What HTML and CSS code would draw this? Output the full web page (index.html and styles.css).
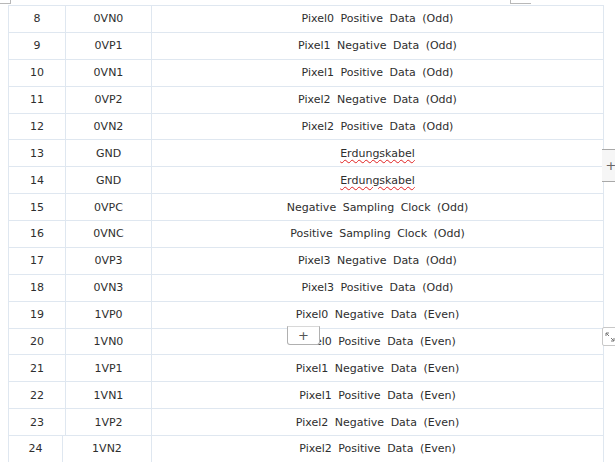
FILE: index.html
```html
<!DOCTYPE html>
<html>
<head>
<meta charset="utf-8">
<link rel="stylesheet" href="styles.css">
</head>
<body>
<div class="page">
  <div class="mark mark-left"></div>
  <div class="mark mark-right"></div>
  <div class="table">
    <div class="row"><div class="c">8</div><div class="c">0VN0</div><div class="c">Pixel0 Positive Data (Odd)</div></div>
    <div class="row"><div class="c">9</div><div class="c">0VP1</div><div class="c">Pixel1 Negative Data (Odd)</div></div>
    <div class="row"><div class="c">10</div><div class="c">0VN1</div><div class="c">Pixel1 Positive Data (Odd)</div></div>
    <div class="row"><div class="c">11</div><div class="c">0VP2</div><div class="c">Pixel2 Negative Data (Odd)</div></div>
    <div class="row"><div class="c">12</div><div class="c">0VN2</div><div class="c">Pixel2 Positive Data (Odd)</div></div>
    <div class="row"><div class="c">13</div><div class="c">GND</div><div class="c"><span class="spell">Erdungskabel</span></div></div>
    <div class="row"><div class="c">14</div><div class="c">GND</div><div class="c"><span class="spell">Erdungskabel</span></div></div>
    <div class="row"><div class="c">15</div><div class="c">0VPC</div><div class="c">Negative Sampling Clock (Odd)</div></div>
    <div class="row"><div class="c">16</div><div class="c">0VNC</div><div class="c">Positive Sampling Clock (Odd)</div></div>
    <div class="row"><div class="c">17</div><div class="c">0VP3</div><div class="c">Pixel3 Negative Data (Odd)</div></div>
    <div class="row"><div class="c">18</div><div class="c">0VN3</div><div class="c">Pixel3 Positive Data (Odd)</div></div>
    <div class="row"><div class="c">19</div><div class="c">1VP0</div><div class="c">Pixel0 Negative Data (Even)</div></div>
    <div class="row"><div class="c">20</div><div class="c">1VN0</div><div class="c">Pixel0 Positive Data (Even)</div></div>
    <div class="row"><div class="c">21</div><div class="c">1VP1</div><div class="c">Pixel1 Negative Data (Even)</div></div>
    <div class="row"><div class="c">22</div><div class="c">1VN1</div><div class="c">Pixel1 Positive Data (Even)</div></div>
    <div class="row"><div class="c">23</div><div class="c">1VP2</div><div class="c">Pixel2 Negative Data (Even)</div></div>
    <div class="row row-last"><div class="c">24</div><div class="c">1VN2</div><div class="c">Pixel2 Positive Data (Even)</div></div>
  </div>
  <div class="add-col">+</div>
  <div class="add-row">+</div>
  <div class="resize">
    <svg width="10" height="10" viewBox="0 0 10 10"><path d="M1 1h3M1 1v3M1 1l3 3M9 9h-3M9 9v-3M9 9l-3-3" stroke="#777" stroke-width="1" fill="none"/></svg>
  </div>
</div>
</body>
</html>
```

FILE: styles.css
```css
html, body {
  margin: 0;
  padding: 0;
  background: #fff;
  overflow: hidden;
}
.page {
  position: relative;
  width: 615px;
  height: 462px;
  overflow: hidden;
  font-family: "DejaVu Sans", Tahoma, sans-serif;
  font-size: 11px;
  color: #2e2e2e;
}
.mark {
  position: absolute;
  border-color: #b8b8b8;
  border-style: solid;
}
.mark-left {
  left: 0;
  top: 0;
  width: 10px;
  height: 3px;
  border-width: 0 1px 1px 0;
}
.mark-right {
  left: 510px;
  top: 0;
  width: 20px;
  height: 3px;
  border-width: 0 0 1px 1px;
}
.table {
  margin: 5px 0 0 8px;
  width: 595px;
  border-top: 1px solid #dfe7f0;
  border-left: 1px solid #dfe7f0;
}
.row {
  display: grid;
  grid-template-columns: 57px 86px 1fr;
  height: 26.875px;
  box-sizing: border-box;
  border-bottom: 1px solid #dfe7f0;
}
.row-last {
  grid-template-columns: 54px 89px 1fr;
}
.c {
  display: flex;
  align-items: center;
  justify-content: center;
  border-right: 1px solid #dfe7f0;
  white-space: pre;
  word-spacing: 3px;
}
.spell {
  text-decoration: underline wavy #e02020;
  text-decoration-thickness: 1px;
  text-underline-offset: 2px;
  word-spacing: 0;
}
.add-col {
  position: absolute;
  left: 602px;
  top: 149px;
  width: 14px;
  height: 31px;
  background: #f6f6f6;
  border-top: 1px solid #a8a8a8;
  border-bottom: 1px solid #a8a8a8;
  display: flex;
  align-items: center;
  justify-content: center;
  color: #666;
  font-size: 13px;
  padding-left: 2px;
}
.add-row {
  position: absolute;
  left: 287px;
  top: 326px;
  width: 31px;
  height: 17px;
  background: #fff;
  border: 1px solid #b0b0b0;
  border-top-color: #d8d8d8;
  border-radius: 0 0 3px 3px;
  display: flex;
  align-items: center;
  justify-content: center;
  color: #555;
  font-size: 13px;
  line-height: 1;
}
.resize {
  position: absolute;
  left: 602px;
  top: 327px;
  width: 14px;
  height: 17px;
  background: #fff;
  border: 1px solid #c8c8c8;
  border-radius: 2px 0 0 2px;
  display: flex;
  align-items: center;
  justify-content: center;
}
```
